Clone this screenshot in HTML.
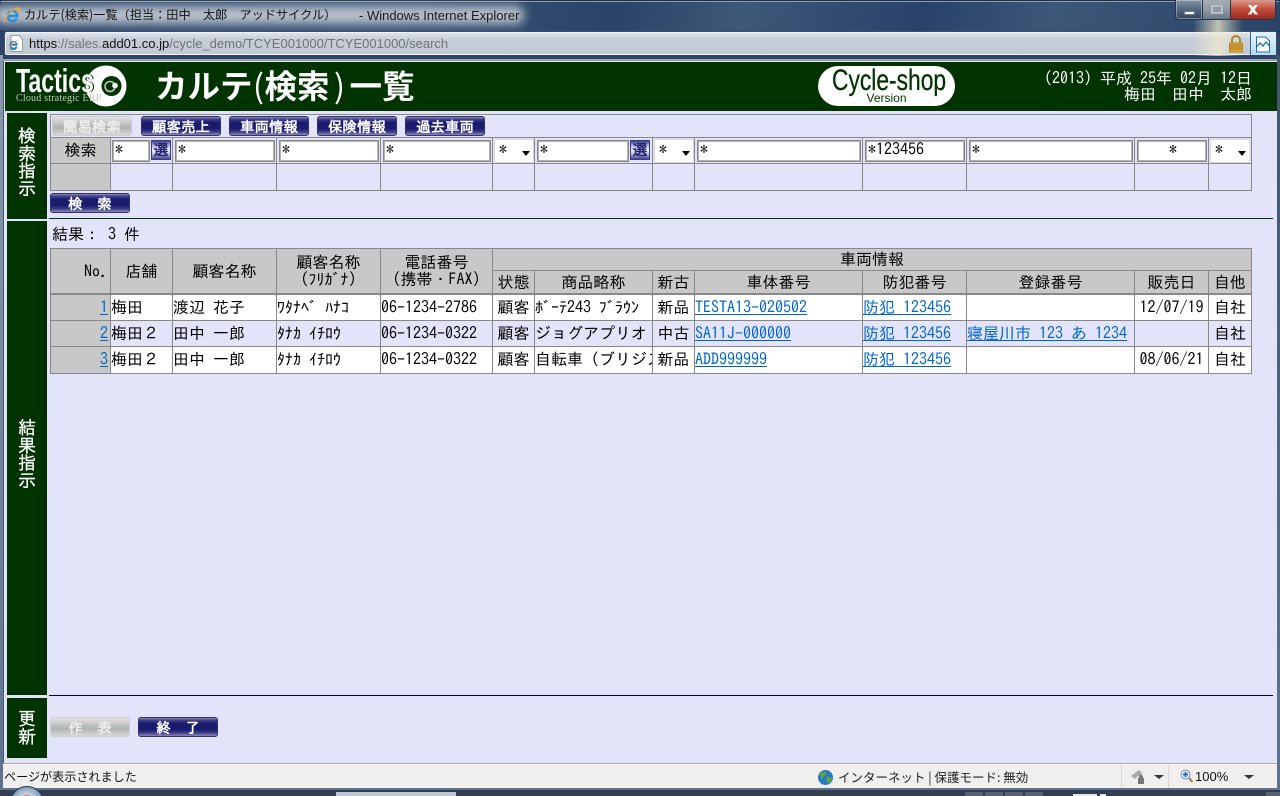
<!DOCTYPE html>
<html lang="ja"><head><meta charset="utf-8"><title>カルテ(検索)一覧</title>
<style>
*{margin:0;padding:0;box-sizing:border-box}
html,body{width:1280px;height:796px;overflow:hidden;background:#2b4468}
body{position:relative;font-family:"IPAGothic","Liberation Sans",sans-serif;font-size:16px;color:#000}
.a{position:absolute}
.t{white-space:nowrap;line-height:1}
table{position:absolute;left:50px;border-collapse:separate;border-spacing:0;table-layout:fixed;width:1202px;border-left:1px solid #888;border-top:1px solid #888}
td{border-right:1px solid #888;border-bottom:1px solid #888;overflow:hidden;white-space:nowrap;font-size:16px;line-height:17px;padding:0;vertical-align:middle}
.g{background:#c8c8c8}.c{text-align:center;padding:0}.r{text-align:right;padding:0 2px 0 0}
.w{background:#fff}.l{background:#e3e4f9}
.u td{padding-bottom:1px}
a{color:#0066cc;text-decoration:underline}
.i{position:absolute;height:22px;background:#fff;border:1px solid #888;outline:1px solid #b4b4b4;outline-offset:-2px;font-size:16px;line-height:15px;padding:1px 0 0 2px;white-space:nowrap;overflow:hidden}
.s{position:absolute;height:24px;top:139px;width:40px;background:#fff;border:1px solid #d8d8e2;border-radius:2px;font-size:16px;line-height:18px;padding-left:4px}
.s:after{content:"";position:absolute;right:3px;top:11px;border:4px solid transparent;border-top:5px solid #000;border-bottom:0}
.x{position:absolute;top:140px;width:20px;height:20px;background:linear-gradient(#3d3d8c,#a8a8d4 22%,#f4f4fc 50%,#a8a8d4 78%,#3d3d8c);border:1px solid #3b3b8a;color:#24246e;font-size:15px;font-weight:bold;line-height:18px;text-align:center;overflow:hidden}
.b,.d{position:absolute;width:80px;height:20px;border-radius:3px;color:#fff;font-size:14.500px;font-weight:bold;line-height:20px;text-align:center;white-space:pre}
.b{background:linear-gradient(#8a86b4 0,#45438c 12%,#1b1b6e 30%,#1b1b6e 65%,#3e3c88 82%,#8b87b5 100%);border:1px solid #33336e}
.d{background:linear-gradient(#e3e3e3 0,#c4c4c4 35%,#b0b4b0 60%,#d8d8d8 100%);border:1px solid #cfcfd6;color:#eeeeee}
.side{position:absolute;left:7px;width:40px;background:#003300;color:#fff;font-size:18px;line-height:17.6px;text-align:center;-webkit-text-stroke:.25px #fff}
</style></head><body>

<!-- title bar -->
<div class="a" style="left:0;top:0;width:1280px;height:31px;background:linear-gradient(100deg,#2c4668 0,#3a5576 30%,#2a4468 48%,#3d5878 58%,#28426a 72%,#3c5778 82%,#2a4468 100%)"></div>
<div class="a" style="left:0;top:0;width:1280px;height:1px;background:#1f3048"></div>
<div class="a" style="left:1px;top:1px;width:1278px;height:1px;background:#8d9db2"></div>
<div class="a" style="left:-6px;top:6px;width:530px;height:18px;background:#b9c1cd;filter:blur(5px);border-radius:8px"></div>
<svg class="a" style="left:3px;top:6px" width="18" height="18" viewBox="0 0 18 18">
<path d="M3.500 10a6 6 0 0 1 12 0v1.200H6.400a3 3 0 0 0 5.700 1h3.100A6 6 0 0 1 3.500 10zM6.400 8.800h6.200a3.100 3.100 0 0 0-6.200 0z" fill="#2b8de0"/>
<path d="M1.500 17c-1.800-2 1.500-8 6-11.800S15.500.500 17 2c1 1.200-.5 3.500-2 5.500-.3-1.500 0-3.500-1-4C11 2.800 4.800 8.500 3 13.500c-.4 1.200-.7 2.500-1.500 3.500z" fill="#eeaa2e"/>
</svg>
<div class="a t" style="left:24px;top:7px;font:12.200px/15px 'Noto Sans CJK JP',sans-serif;color:#111;white-space:pre">カルテ(検索)一覧（担当：田中　太郎　アッドサイクル）</div>
<div class="a t" style="left:359px;top:8px;font:13px/15px 'Liberation Sans',sans-serif;color:#1a1a1a;white-space:pre">- Windows Internet Explorer</div>

<!-- window buttons -->
<div class="a" style="left:1175px;top:0;width:28px;height:20px;background:linear-gradient(#8494a8,#54677f 50%,#31445e);border:1px solid #25364c;border-top:0;border-radius:0 0 0 4px;box-shadow:0 0 0 1px rgba(255,255,255,.35) inset"></div>
<div class="a" style="left:1184px;top:11px;width:11px;height:4px;background:#f4f6f8;border:1px solid #6a7a90"></div>
<div class="a" style="left:1203px;top:0;width:27px;height:20px;background:linear-gradient(#a6adb5,#8f9aa4 50%,#6b7885);border-bottom:1px solid #25364c"></div>
<div class="a" style="left:1211px;top:5px;width:12px;height:9px;border:2px solid #b9bfc5;background:#8f9aa4"></div>
<div class="a" style="left:1230px;top:0;width:46px;height:20px;background:linear-gradient(#d99a90,#c24a3a 50%,#9c2a20);border:1px solid #25364c;border-top:0;border-radius:0 0 4px 0"></div>
<div class="a" style="left:1230px;top:0;width:46px;height:20px;font:bold 16px/19px 'Liberation Sans',sans-serif;color:#f2f2f2;text-align:center;-webkit-text-stroke:.9px #f2f2f2;text-shadow:0 0 1px #555">x</div>

<!-- address bar -->
<div class="a" style="left:0;top:31px;width:1280px;height:1px;background:#20344f"></div>
<div class="a" style="left:5px;top:32px;width:1271px;height:23px;background:linear-gradient(#dfe2e8,#c6cdd7 30%,#c3cad5);border:1px solid #f0f2f5;border-radius:2px;box-shadow:0 0 0 1px #37506e"></div>
<div class="a" style="left:1193px;top:20px;width:50px;height:36px;background:linear-gradient(90deg,rgba(240,235,205,0),rgba(240,235,205,.75) 50%,rgba(240,235,205,0));z-index:1"></div>
<svg class="a" style="left:8px;top:35px;z-index:4" width="16" height="17" viewBox="0 0 16 17">
<path d="M3 .5h8l3.500 3.500v12.500H3z" fill="#fff" stroke="#99a"/>
<path d="M1.500 10a4 4 0 0 1 8 0v.8H3.600a2.200 2.200 0 0 0 4 1h2A4 4 0 0 1 1.500 10zM3.700 9h3.800a1.900 1.900 0 0 0-3.800 0z" fill="#1f7fd4"/>
<path d="M1 15c-1-1.500 2-5.500 5-8 2-1.600 4-2.500 4.500-2-.8.300-6 4-8 7.500-.6 1-1 2-1.500 2.500z" fill="#e8a93a"/>
</svg>
<div class="a t" style="left:29px;top:36px;font:13px/15px 'Liberation Sans',sans-serif;color:#6f7479;z-index:2"><span style="color:#111">https</span>://sales.<span style="color:#111">add01.co.jp</span>/cycle_demo/TCYE001000/TCYE001000/search</div>
<svg class="a" style="left:1228px;top:35px;z-index:4" width="16" height="18" viewBox="0 0 16 18">
<path d="M4 8V5a4 4 0 0 1 8 0v3" fill="none" stroke="#a8862a" stroke-width="2"/>
<rect x="1.500" y="8" width="13" height="9" fill="#dba93a" stroke="#b98a1e"/>
<path d="M2 10h12M2 12h12M2 14h12" stroke="#a87f1c"/>
</svg>
<div class="a" style="left:1250px;top:32px;width:26px;height:23px;background:linear-gradient(#e6f3fb,#b8dcf3);border-left:1px solid #2a6a9c;z-index:4"></div>
<svg class="a" style="left:1255px;top:36px;z-index:5" width="16" height="17" viewBox="0 0 16 17">
<path d="M1.500 1h9l4 4v11h-13z" fill="#fff" stroke="#1b6fb0"/>
<path d="M1.500 11l3.500-4 3 3 3-4 3.500 4" fill="none" stroke="#1b6fb0" stroke-width="1.300"/>
</svg>
<div class="a" style="left:0;top:55px;width:1280px;height:5px;background:#2b4468"></div>

<!-- frame -->
<div class="a" style="left:0;top:55px;width:3px;height:735px;background:linear-gradient(#8a99ac,#5d7391)"></div>
<div class="a" style="left:3px;top:59px;width:1275px;height:2px;background:#9aa0a8"></div>
<div class="a" style="left:3px;top:61px;width:1px;height:703px;background:#40556f"></div>
<div class="a" style="left:4px;top:61px;width:1px;height:703px;background:#e8e8ee"></div>
<div class="a" style="left:1277px;top:55px;width:3px;height:735px;background:linear-gradient(#40566f,#5d7391)"></div>

<!-- page -->
<div class="a" style="left:5px;top:61px;width:1272px;height:703px;background:#e3e4f9"></div>
<div class="a" style="left:5px;top:62px;width:1272px;height:49px;background:#003300"></div>

<!-- Tactics logo -->
<svg class="a" style="left:5px;top:62px" width="135" height="49" viewBox="0 0 135 49">
<circle cx="101" cy="24" r="20.500" fill="#fff"/>
<circle cx="106.500" cy="24" r="10" fill="#003300"/>
<circle cx="105" cy="24.500" r="5" fill="none" stroke="#c8c8c8" stroke-width="1.500"/>
<circle cx="110" cy="23.500" r="2.800" fill="#fff"/>
</svg>
<div class="a t" style="left:16px;top:63px;font:bold 33px/36px 'Liberation Sans',sans-serif;color:#fff;transform:scaleX(.7);transform-origin:0 0;text-shadow:1.500px 0 0 #003300,-1.500px 0 0 #003300">Tactics</div>
<div class="a t" style="left:16px;top:93px;font:10px/12px 'Liberation Serif',serif;color:#c4cabb;letter-spacing:.2px">Cloud strategic ERP</div>

<!-- heading -->
<div class="a t" style="left:155px;top:67px;font:bold 32.500px/36px 'Noto Sans CJK JP',sans-serif;color:#fff;white-space:pre">カルテ<span style="display:inline-block;width:12px;font-weight:normal;text-align:center">(</span>検索<span style="display:inline-block;width:20px;font-weight:normal;text-align:center">)</span>一覧</div>

<!-- Cycle-shop logo -->
<div class="a" style="left:818px;top:66px;width:137px;height:40px;background:#fff;border-radius:20px"></div>
<div class="a t" style="left:814px;top:66px;width:137px;text-align:center;font:30px/30px 'Liberation Sans',sans-serif;color:#003300;-webkit-text-stroke:.3px #003300"><span style="display:inline-block;transform:scaleX(.76)">Cycle-shop</span></div>
<div class="a t" style="left:818px;top:92px;width:137px;text-align:center;font:12px/13px 'Liberation Sans',sans-serif;color:#003300">Version</div>

<!-- date -->
<div class="a t" style="left:900px;top:70px;width:352px;text-align:right;color:#fff;font-size:16px;line-height:16px;white-space:pre">(2013) 平成 25年 02月 12日</div>
<div class="a t" style="left:900px;top:86px;width:352px;text-align:right;color:#fff;font-size:16px;line-height:16px;white-space:pre">梅田　田中　太郎</div>

<!-- side labels -->
<div class="side" style="top:113px;height:106px;padding-top:15px">検<br>索<br>指<br>示</div>
<div class="side" style="top:221px;height:474px;padding-top:199px">結<br>果<br>指<br>示</div>
<div class="side" style="top:698px;height:60px;padding-top:13px">更<br>新</div>

<!-- search table -->
<table style="top:114px">
<colgroup><col style="width:60px"><col style="width:62px"><col style="width:104px"><col style="width:104px"><col style="width:112px"><col style="width:42px"><col style="width:118px"><col style="width:42px"><col style="width:168px"><col style="width:104px"><col style="width:168px"><col style="width:74px"><col style="width:43px"></colgroup>
<tr style="height:23px"><td colspan="13"></td></tr>
<tr style="height:26px"><td class="g c">検索</td><td></td><td></td><td></td><td></td><td></td><td></td><td></td><td></td><td></td><td></td><td></td><td></td></tr>
<tr style="height:27px"><td class="g"></td><td></td><td></td><td></td><td></td><td></td><td></td><td></td><td></td><td></td><td></td><td></td><td></td></tr>
</table>

<div class="d" style="left:52px;top:116px">簡易検索</div>
<div class="b" style="left:141px;top:116px">顧客売上</div>
<div class="b" style="left:229px;top:116px">車両情報</div>
<div class="b" style="left:317px;top:116px">保険情報</div>
<div class="b" style="left:405px;top:116px">過去車両</div>

<div class="i" style="left:112px;top:140px;width:38px">*</div><div class="x" style="left:151px">選</div>
<div class="i" style="left:175px;top:140px;width:100px">*</div>
<div class="i" style="left:279px;top:140px;width:100px">*</div>
<div class="i" style="left:383px;top:140px;width:108px">*</div>
<div class="s" style="left:494px">*</div>
<div class="i" style="left:537px;top:140px;width:92px">*</div><div class="x" style="left:630px">選</div>
<div class="s" style="left:654px">*</div>
<div class="i" style="left:697px;top:140px;width:164px">*</div>
<div class="i" style="left:865px;top:140px;width:100px">*123456</div>
<div class="i" style="left:969px;top:140px;width:164px">*</div>
<div class="i" style="left:1137px;top:140px;width:70px;text-align:center">*</div>
<div class="s" style="left:1210px">*</div>

<div class="b" style="left:50px;top:193px">検　索</div>
<div class="a" style="left:49px;top:218px;width:1224px;height:1px;background:#003300"></div>

<div class="a t" style="left:52px;top:226px;white-space:pre">結果： 3 件</div>

<!-- result table -->
<table style="top:248px">
<colgroup><col style="width:60px"><col style="width:62px"><col style="width:104px"><col style="width:104px"><col style="width:112px"><col style="width:42px"><col style="width:118px"><col style="width:42px"><col style="width:168px"><col style="width:104px"><col style="width:168px"><col style="width:74px"><col style="width:43px"></colgroup>
<tr style="height:22px" class="g">
<td rowspan="2" class="g r" style="border-bottom-width:2px">No.</td><td rowspan="2" class="g c" style="border-bottom-width:2px">店舗</td><td rowspan="2" class="g c" style="border-bottom-width:2px">顧客名称</td>
<td rowspan="2" class="g c" style="border-bottom-width:2px">顧客名称<br>(ﾌﾘｶﾞﾅ)</td><td rowspan="2" class="g c" style="border-bottom-width:2px">電話番号<br>(携帯・FAX)</td>
<td colspan="8" class="g c">車両情報</td></tr>
<tr style="height:24px">
<td class="g c" style="border-bottom-width:2px">状態</td><td class="g c" style="border-bottom-width:2px">商品略称</td><td class="g c" style="border-bottom-width:2px">新古</td><td class="g c" style="border-bottom-width:2px">車体番号</td><td class="g c" style="border-bottom-width:2px">防犯番号</td><td class="g c" style="border-bottom-width:2px">登録番号</td><td class="g c" style="border-bottom-width:2px">販売日</td><td class="g c" style="border-bottom-width:2px">自他</td></tr>
<tr style="height:26px" class="w">
<td class="g r"><a>1</a></td><td>梅田</td><td>渡辺 花子</td><td>ﾜﾀﾅﾍﾞ ﾊﾅｺ</td><td>06-1234-2786</td><td class="c">顧客</td><td>ﾎﾞｰﾃ243 ﾌﾞﾗｳﾝ</td><td class="c">新品</td><td><a>TESTA13-020502</a></td><td><a>防犯 123456</a></td><td></td><td class="c">12/07/19</td><td class="c">自社</td></tr>
<tr style="height:26px" class="l">
<td class="g r"><a>2</a></td><td>梅田２</td><td>田中 一郎</td><td>ﾀﾅｶ ｲﾁﾛｳ</td><td>06-1234-0322</td><td class="c">顧客</td><td>ジョグアプリオ</td><td class="c">中古</td><td><a>SA11J-000000</a></td><td><a>防犯 123456</a></td><td><a>寝屋川市 123 あ 1234</a></td><td></td><td class="c">自社</td></tr>
<tr style="height:27px" class="w u">
<td class="g r"><a>3</a></td><td>梅田２</td><td>田中 一郎</td><td>ﾀﾅｶ ｲﾁﾛｳ</td><td>06-1234-0322</td><td class="c">顧客</td><td>自転車（ブリジストン</td><td class="c">新品</td><td><a>ADD999999</a></td><td><a>防犯 123456</a></td><td></td><td class="c">08/06/21</td><td class="c">自社</td></tr>
</table>

<div class="a" style="left:49px;top:695px;width:1224px;height:1px;background:#000050"></div>
<div class="d" style="left:50px;top:717px">作　表</div>
<div class="b" style="left:138px;top:717px">終　了</div>

<!-- status bar -->
<div class="a" style="left:3px;top:763px;width:1274px;height:1px;background:#a9a9a9"></div>
<div class="a" style="left:3px;top:764px;width:1274px;height:24px;background:#f1eeee;border-top:1px solid #fff"></div>
<div class="a t" style="left:4px;top:769px;font:12.100px/15px 'Noto Sans CJK JP',sans-serif;color:#111">ページが表示されました</div>
<svg class="a" style="left:817px;top:769px" width="17" height="17" viewBox="0 0 17 17">
<circle cx="8.500" cy="8.500" r="7.500" fill="#2a78c8"/>
<path d="M3 5c2-2 5-3 6-2s-1 3-2 4-1 3-2 3-2-3-2-5zM10 8c2-1 4 0 5 2-1 3-3 4-4 4s-2-4-1-6z" fill="#5aa83e"/>
</svg>
<div class="a t" style="left:838px;top:769px;font:12.500px/15px 'Noto Sans CJK JP',sans-serif;color:#222;white-space:pre">インターネット | 保護モード: 無効</div>
<div class="a" style="left:1121px;top:765px;width:1px;height:23px;background:#d8d6d6"></div>
<svg class="a" style="left:1130px;top:769px" width="17" height="16" viewBox="0 0 17 16">
<path d="M1 7l8-6 3 3v3H8L5 10z" fill="#a9a9a9"/><path d="M9 8a2 2 0 0 1 4 0v1h1v6H8V9h1z" fill="#777"/>
</svg>
<div class="a" style="left:1154px;top:775px;border:4px solid transparent;border-top:4px solid #333;border-bottom:0;width:0;height:0;border-left-width:5px;border-right-width:5px"></div>
<div class="a" style="left:1168px;top:765px;width:1px;height:23px;background:#d8d6d6"></div>
<svg class="a" style="left:1180px;top:769px" width="13" height="14" viewBox="0 0 13 14">
<circle cx="5.500" cy="5.500" r="4.500" fill="#cfe6f8" stroke="#7d9bb8"/><path d="M3 5.500h5M5.500 3v5" stroke="#1a5cb0" stroke-width="1.500"/><path d="M9 9l3.500 4" stroke="#b08040" stroke-width="2"/>
</svg>
<div class="a t" style="left:1195px;top:769px;font:13px/15px 'Liberation Sans',sans-serif;color:#111">100%</div>
<div class="a" style="left:1244px;top:775px;border:4px solid transparent;border-top:4px solid #333;border-bottom:0;width:0;height:0;border-left-width:5px;border-right-width:5px"></div>

<!-- taskbar -->
<div class="a" style="left:0;top:788px;width:1280px;height:2px;background:#5d7391"></div>
<div class="a" style="left:0;top:790px;width:1280px;height:6px;background:#333f4e"></div>
<div class="a" style="left:10px;top:786px;width:34px;height:34px;border-radius:50%;background:radial-gradient(circle at 50% 45%,#e06a3a 0,#c9522c 22%,#c7d4e2 30%,#5c7ea3 80%);border:1px solid #24354c"></div>
<div class="a" style="left:336px;top:792px;width:120px;height:4px;background:#c3c8ce"></div>
<div class="a" style="left:965px;top:792px;width:18px;height:4px;background:#59636f"></div>
<div class="a" style="left:985px;top:792px;width:18px;height:4px;background:#59636f"></div>
<div class="a" style="left:1005px;top:792px;width:18px;height:4px;background:#59636f"></div>
<div class="a" style="left:1025px;top:792px;width:18px;height:4px;background:#59636f"></div>
<div class="a" style="left:1073px;top:794px;width:24px;height:2px;background:#e4e6e8"></div>
<div class="a" style="left:1100px;top:794px;width:6px;height:2px;background:#e4e6e8"></div>
<div class="a" style="left:1266px;top:792px;width:14px;height:4px;background:#59636f"></div>
</body></html>
